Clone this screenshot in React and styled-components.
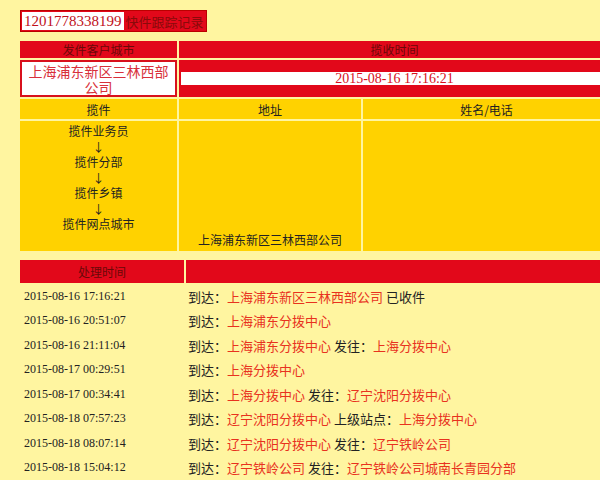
import React from "react";
import styled, { createGlobalStyle } from "styled-components";

const G = createGlobalStyle`
  body{margin:0;background:#fff5a0;font-family:"Liberation Serif","Noto Sans CJK SC",serif;font-size:12px;color:#222;}
`;
const Page = styled.div`padding:10px 0 0 20px;width:600px;box-sizing:border-box;overflow:hidden;`;
const Title = styled.div`display:inline-flex;background:#e2081a;border:1px solid #b00;font-size:15px;height:20px;align-items:center;`;
const Num = styled.span`background:#fff;color:#c0101a;padding:0 2px;margin-left:1px;line-height:18px;`;
const TitleText = styled.span`color:#8a0a0a;padding:0 2px;font-family:"Noto Sans CJK SC",sans-serif;font-size:13px;`;
const Grid = styled.div`display:grid;grid-template-columns:${p=>p.$cols};gap:2px;margin-top:${p=>p.$mt||0}px;width:${p=>p.$w||590}px;`;
const Cell = styled.div`
  background:${p=>p.$bg};color:${p=>p.$c||"#222"};height:${p=>p.$h}px;
  display:flex;flex-direction:column;align-items:center;justify-content:${p=>p.$j||"center"};
  font-family:"Noto Sans CJK SC",sans-serif;font-size:12px;box-sizing:border-box;text-align:center;
`;
const WhiteCell = styled(Cell)`background:#fff;border:2px solid #d8101c;color:#d8303a;font-size:14px;line-height:16px;`;
const RedCell = styled(Cell)`background:#e2081a;padding:12px 2px;`;
const Inner = styled.div`background:#fff;width:100%;height:100%;display:flex;align-items:center;justify-content:center;color:#d8101c;font-family:"Liberation Serif",serif;font-size:14px;`;
const Flow = styled.div`line-height:15.5px;padding-top:2px;`;
const Row = styled.div`display:grid;grid-template-columns:168px 1fr;height:24.5px;align-items:center;font-size:12px;`;
const Time = styled.span`padding-left:4px;font-family:"Liberation Serif",serif;`;
const Msg = styled.span`font-family:"Noto Sans CJK SC",sans-serif;font-size:13px;white-space:nowrap;`;
const R = styled.span`color:#e8321e;`;

const rows = [
  ["2015-08-16 17:16:21", [["到达：",0],["上海浦东新区三林西部公司",1],[" 已收件",0]]],
  ["2015-08-16 20:51:07", [["到达：",0],["上海浦东分拨中心",1]]],
  ["2015-08-16 21:11:04", [["到达：",0],["上海浦东分拨中心",1],[" 发往：",0],["上海分拨中心",1]]],
  ["2015-08-17 00:29:51", [["到达：",0],["上海分拨中心",1]]],
  ["2015-08-17 00:34:41", [["到达：",0],["上海分拨中心",1],[" 发往：",0],["辽宁沈阳分拨中心",1]]],
  ["2015-08-18 07:57:23", [["到达：",0],["辽宁沈阳分拨中心",1],[" 上级站点：",0],["上海分拨中心",1]]],
  ["2015-08-18 08:07:14", [["到达：",0],["辽宁沈阳分拨中心",1],[" 发往：",0],["辽宁铁岭公司",1]]],
  ["2015-08-18 15:04:12", [["到达：",0],["辽宁铁岭公司",1],[" 发往：",0],["辽宁铁岭公司城南长青园分部",1]]],
];

export default function App(){
  return <><G/><Page>
    <Title><Num>1201778338199</Num><TitleText>快件跟踪记录</TitleText></Title>
    <Grid $cols="157px 1fr" $mt={9}>
      <Cell $bg="#e2081a" $c="#6a0808" $h={17}>发件客户城市</Cell>
      <Cell $bg="#e2081a" $c="#6a0808" $h={17}>揽收时间</Cell>
      <WhiteCell $h={37}>上海浦东新区三林西部<br/>公司</WhiteCell>
      <RedCell $h={37}><Inner>2015-08-16 17:16:21</Inner></RedCell>
    </Grid>
    <Grid $cols="157px 182px 1fr" $mt={2}>
      <Cell $bg="#ffd200" $h={20}>揽件</Cell>
      <Cell $bg="#ffd200" $h={20}>地址</Cell>
      <Cell $bg="#ffd200" $h={20}>姓名/电话</Cell>
      <Cell $bg="#ffd200" $h={130} $j="flex-start"><Flow>揽件业务员<br/>↓<br/>揽件分部<br/>↓<br/>揽件乡镇<br/>↓<br/>揽件网点城市</Flow></Cell>
      <Cell $bg="#ffd200" $h={130} $j="flex-end"><span style={{paddingBottom:3}}>上海浦东新区三林西部公司</span></Cell>
      <Cell $bg="#ffd200" $h={130}/>
    </Grid>
    <Grid $cols="164px 1fr" $mt={9}>
      <Cell $bg="#e2081a" $c="#6a0808" $h={23}>处理时间</Cell>
      <Cell $bg="#e2081a" $h={23}/>
    </Grid>
    <div style={{marginTop:1}}>
      {rows.map(([t,m])=><Row key={t}><Time>{t}</Time><Msg>{m.map(([s,r],i)=>r?<R key={i}>{s}</R>:<span key={i}>{s}</span>)}</Msg></Row>)}
    </div>
  </Page></>;
}
